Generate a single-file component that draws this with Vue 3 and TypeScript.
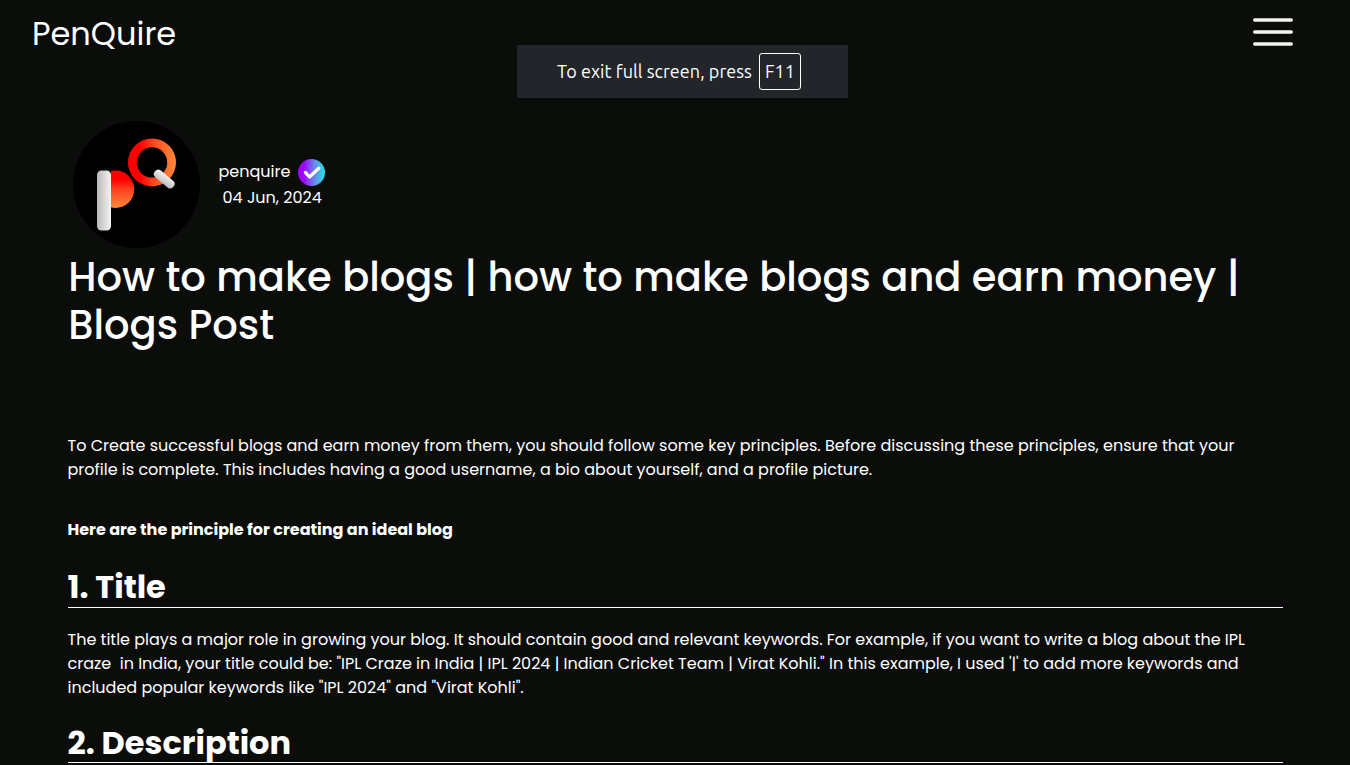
<template>
  <div class="page">
    <header class="navbar">
      <a class="brand">PenQuire</a>
      <button class="menu" aria-label="Menu">
        <svg width="40" height="28" viewBox="0 0 40 28">
          <path
            d="M1.7 2h36.6M1.7 14h36.6M1.7 26h36.6"
            stroke="#f4f4f2"
            stroke-width="3.3"
            stroke-linecap="round"
          />
        </svg>
      </button>
    </header>

    <div class="toast">
      <span class="toast-text">To exit full screen, press</span>
      <kbd class="key">F11</kbd>
    </div>

    <main class="post">
      <div class="author">
        <svg class="avatar" viewBox="0 0 127 127">
          <defs>
            <linearGradient id="ring" x1="0" x2="1" y1="0" y2="0">
              <stop offset="0.25" stop-color="#ff0000" />
              <stop offset="0.55" stop-color="#ff4a22" />
              <stop offset="1" stop-color="#ff8a38" />
            </linearGradient>
            <linearGradient id="bowl" x1="0" x2="0" y1="0" y2="1">
              <stop offset="0.25" stop-color="#ff0000" />
              <stop offset="0.5" stop-color="#ff4020" />
              <stop offset="1" stop-color="#ff8a38" />
            </linearGradient>
            <linearGradient id="stem" x1="0" x2="1" y1="0" y2="0">
              <stop offset="0" stop-color="#b8b8b8" />
              <stop offset="1" stop-color="#f4f4f4" />
            </linearGradient>
            <linearGradient id="tail" x1="0.3" x2="0.7" y1="0" y2="1">
              <stop offset="0" stop-color="#f4f4f4" />
              <stop offset="1" stop-color="#bcbcbc" />
            </linearGradient>
          </defs>
          <circle cx="63.5" cy="63.5" r="63.5" fill="#000" />
          <circle cx="42.4" cy="68.2" r="18.8" fill="url(#bowl)" />
          <rect x="20" y="49" width="18" height="61" fill="#000" />
          <rect x="24" y="49.5" width="14" height="60" rx="4.5" fill="url(#stem)" />
          <path
            d="M79 17.4a24 24 0 1 0 0 48a24 24 0 1 0 0-48zM79 26.2a15.2 15.2 0 1 1 0 30.4a15.2 15.2 0 1 1 0-30.4z"
            fill="url(#ring)"
            fill-rule="evenodd"
          />
          <rect
            x="79.2"
            y="53.7"
            width="24"
            height="8.6"
            rx="4"
            fill="url(#tail)"
            transform="rotate(40 91.2 58)"
          />
        </svg>
        <div class="meta">
          <div class="name-row">
            <span class="name">penquire</span>
            <svg class="badge" viewBox="0 0 27 27">
              <defs>
                <linearGradient id="verified" x1="0" x2="1" y1="0" y2="0">
                  <stop offset="0.2" stop-color="#a000ff" />
                  <stop offset="0.6" stop-color="#6a86e6" />
                  <stop offset="1" stop-color="#22e6e6" />
                </linearGradient>
              </defs>
              <circle cx="13.5" cy="13.5" r="13.5" fill="url(#verified)" />
              <path
                d="M7.3 13.4l4.2 4.6l9.4-8.8"
                fill="none"
                stroke="#fff"
                stroke-width="3.2"
                stroke-linecap="round"
                stroke-linejoin="round"
              />
            </svg>
          </div>
          <span class="date">04 Jun, 2024</span>
        </div>
      </div>

      <h1 class="title">{{ title }}</h1>

      <p class="intro">{{ intro }}</p>

      <p class="lead">Here are the principle for creating an ideal blog</p>

      <section v-for="section in sections" :key="section.heading" class="section">
        <h2 class="heading">{{ section.heading }}</h2>
        <p v-if="section.body" class="body">{{ section.body }}</p>
      </section>
    </main>
  </div>
</template>

<script setup lang="ts">
interface Section {
  heading: string
  body?: string
}

const title = 'How to make blogs | how to make blogs and earn money | Blogs Post'

const intro =
  'To Create successful blogs and earn money from them, you should follow some key principles. Before discussing these principles, ensure that your profile is complete. This includes having a good username, a bio about yourself, and a profile picture.'

const sections: Section[] = [
  {
    heading: '1. Title',
    body: 'The title plays a major role in growing your blog. It should contain good and relevant keywords. For example, if you want to write a blog about the IPL craze\u00a0 in India, your title could be: "IPL Craze in India | IPL 2024 | Indian Cricket Team | Virat Kohli." In this example, I used \'|\' to add more keywords and included popular keywords like "IPL 2024" and "Virat Kohli".',
  },
  { heading: '2. Description' },
]
</script>

<style>
body {
  margin: 0;
  background: #0b0d0a;
  overflow: hidden;
}
</style>

<style scoped>
.page {
  box-sizing: border-box;
  height: 765px;
  overflow: hidden;
  position: relative;
  background: #0b0d0a;
  color: #fff;
  font-family: Poppins, Inter, 'Liberation Sans', sans-serif;
  font-size: 16px;
  line-height: 24px;
}

.navbar {
  display: flex;
  justify-content: space-between;
  align-items: flex-start;
  height: 121px;
  box-sizing: border-box;
  padding: 14px 57px 0 32px;
}

.brand {
  font-size: 32px;
  line-height: 40px;
  font-weight: 400;
}

.menu {
  display: flex;
  margin-top: 4px;
  padding: 0;
  border: none;
  background: none;
}

.toast {
  position: absolute;
  top: 45px;
  left: 517px;
  width: 331px;
  height: 53px;
  box-sizing: border-box;
  padding: 0 47px 0 40px;
  display: flex;
  align-items: center;
  justify-content: space-between;
  background: #22252a;
  font-family: Ubuntu, 'Noto Sans', sans-serif;
  font-size: 18px;
}

.toast-text {
  padding-bottom: 2px;
  letter-spacing: 0.05px;
  white-space: nowrap;
}

.key {
  box-sizing: border-box;
  width: 42px;
  height: 37px;
  border: 1px solid #fff;
  border-radius: 3px;
  font: inherit;
  line-height: 35px;
  text-align: center;
}

.post {
  padding: 0 5%;
}

.author {
  display: flex;
  height: 127px;
  padding-left: 5.5px;
}

.avatar {
  width: 127px;
  height: 127px;
}

.meta {
  display: flex;
  flex-direction: column;
  padding: 38px 0 0 18.5px;
}

.name-row {
  display: flex;
  align-items: center;
  gap: 7px;
  height: 27px;
}

.name {
  width: 72px;
  padding-bottom: 2px;
}

.badge {
  width: 27px;
  height: 27px;
}

.date {
  padding-left: 4px;
  white-space: nowrap;
}

.title {
  margin: 5px 0 0;
  padding-left: 0.8px;
  font-size: 40px;
  line-height: 48px;
  font-weight: 500;
}

.intro {
  margin: 85px 0 0;
}

.lead {
  margin: 36px 0 0;
  font-weight: 700;
}

.section {
  margin-top: 24px;
}

.lead + .section {
  margin-top: 27px;
}

.heading {
  margin: 0;
  height: 38px;
  border-bottom: 1px solid #fff;
  font-size: 32px;
  line-height: 37px;
  font-weight: 700;
}

.lead + .section .heading {
  line-height: 35px;
}

.body {
  margin: 20px 0 0;
}
</style>
